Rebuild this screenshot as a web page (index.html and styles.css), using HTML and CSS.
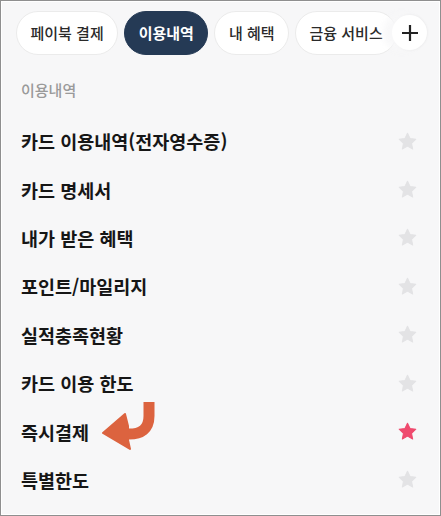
FILE: index.html
```html
<!DOCTYPE html>
<html lang="ko">
<head>
<meta charset="utf-8">
<link rel="stylesheet" href="styles.css">
</head>
<body>
<div class="frame">
  <div class="tabbar">
    <div class="tabs">
      <span class="chip">페이북 결제</span>
      <span class="chip active">이용내역</span>
      <span class="chip">내 혜택</span>
      <span class="chip">금융 서비스</span>
    </div>
    <button class="plus" aria-label="더보기">
      <svg width="18" height="18" viewBox="0 0 18 18"><path d="M9 1V17M1 9H17" stroke="#222" stroke-width="2.2" fill="none"/></svg>
    </button>
  </div>
  <div class="label">이용내역</div>
  <ul class="list">
    <li class="row"><span class="name">카드 이용내역(전자영수증)</span><svg class="star" viewBox="0 0 24 24"><path d="M12 2.5l2.9 6.1 6.6.8-4.9 4.6 1.3 6.6L12 17.3l-5.9 3.3 1.3-6.6-4.9-4.6 6.6-.8z"/></svg></li>
    <li class="row"><span class="name">카드 명세서</span><svg class="star" viewBox="0 0 24 24"><path d="M12 2.5l2.9 6.1 6.6.8-4.9 4.6 1.3 6.6L12 17.3l-5.9 3.3 1.3-6.6-4.9-4.6 6.6-.8z"/></svg></li>
    <li class="row"><span class="name">내가 받은 혜택</span><svg class="star" viewBox="0 0 24 24"><path d="M12 2.5l2.9 6.1 6.6.8-4.9 4.6 1.3 6.6L12 17.3l-5.9 3.3 1.3-6.6-4.9-4.6 6.6-.8z"/></svg></li>
    <li class="row"><span class="name">포인트/마일리지</span><svg class="star" viewBox="0 0 24 24"><path d="M12 2.5l2.9 6.1 6.6.8-4.9 4.6 1.3 6.6L12 17.3l-5.9 3.3 1.3-6.6-4.9-4.6 6.6-.8z"/></svg></li>
    <li class="row"><span class="name">실적충족현황</span><svg class="star" viewBox="0 0 24 24"><path d="M12 2.5l2.9 6.1 6.6.8-4.9 4.6 1.3 6.6L12 17.3l-5.9 3.3 1.3-6.6-4.9-4.6 6.6-.8z"/></svg></li>
    <li class="row"><span class="name">카드 이용 한도</span><svg class="star" viewBox="0 0 24 24"><path d="M12 2.5l2.9 6.1 6.6.8-4.9 4.6 1.3 6.6L12 17.3l-5.9 3.3 1.3-6.6-4.9-4.6 6.6-.8z"/></svg></li>
    <li class="row"><span class="name">즉시결제</span>
      <svg class="arrow" width="58" height="48" viewBox="0 0 58 48">
        <path d="M49 0 V14 C49 27 41 32 29 32 H16" stroke="#dc633f" stroke-width="11" fill="none"/>
        <path d="M3 31 L25 12 L28 24 L28 38 L30 47 Z" fill="#dc633f" stroke="#dc633f" stroke-width="2" stroke-linejoin="round"/>
      </svg>
      <svg class="star on" viewBox="0 0 24 24"><path d="M12 2.5l2.9 6.1 6.6.8-4.9 4.6 1.3 6.6L12 17.3l-5.9 3.3 1.3-6.6-4.9-4.6 6.6-.8z"/></svg></li>
    <li class="row"><span class="name">특별한도</span><svg class="star" viewBox="0 0 24 24"><path d="M12 2.5l2.9 6.1 6.6.8-4.9 4.6 1.3 6.6L12 17.3l-5.9 3.3 1.3-6.6-4.9-4.6 6.6-.8z"/></svg></li>
  </ul>
</div>
</body>
</html>
```

FILE: styles.css
```css
* { box-sizing: border-box; }
html, body {
  margin: 0;
  padding: 0;
  width: 441px;
  height: 516px;
  overflow: hidden;
}
body {
  font-family: "Noto Sans CJK KR", "Noto Sans", sans-serif;
  background: #fff;
}
.frame {
  width: 441px;
  height: 516px;
  border: 1px solid #8f8f8f;
  box-shadow: inset 0 0 0 1px #ffffff;
  background: #f7f7f8;
  position: relative;
  overflow: hidden;
}
.tabbar {
  position: relative;
  padding-top: 10px;
}
.tabs {
  display: flex;
  gap: 6px;
  padding-left: 15px;
  overflow: hidden;
  white-space: nowrap;
}
.chip {
  flex: none;
  height: 44px;
  line-height: 42px;
  padding: 0 13.5px;
  border: 1px solid #ebebeb;
  border-radius: 22px;
  background: #fff;
  color: #2a2a2a;
  font-size: 15px;
  font-weight: 500;
}
.chip.active {
  background: #253a55;
  border-color: #253a55;
  color: #fff;
  font-weight: 700;
}
.plus {
  position: absolute;
  right: 13px;
  top: 14px;
  width: 35px;
  height: 35px;
  border-radius: 50%;
  border: none;
  background: #fff;
  box-shadow: -8px 0 6px 1px rgba(247,247,248,0.9), 0 0 3px rgba(0,0,0,0.08);
  display: flex;
  align-items: center;
  justify-content: center;
  padding: 0;
}
.label {
  margin-top: 25px;
  padding-left: 20px;
  font-size: 15px;
  line-height: 20px;
  color: #9a9a9a;
  font-weight: 500;
}
.list {
  list-style: none;
  margin: 17px 0 0;
  padding: 0;
}
.row {
  position: relative;
  height: 48.4px;
  display: flex;
  align-items: center;
  justify-content: space-between;
  padding: 0 22px 0 20px;
}
.name {
  font-size: 18.5px;
  font-weight: 700;
  color: #161616;
}
.star {
  width: 21px;
  height: 21px;
  fill: #e3e3e5;
  stroke: #e3e3e5;
  stroke-width: 1.2;
  stroke-linejoin: round;
}
.star.on {
  fill: #ef4a6e;
  stroke: #ef4a6e;
}
.arrow {
  position: absolute;
  left: 99px;
  top: -5px;
}
```
